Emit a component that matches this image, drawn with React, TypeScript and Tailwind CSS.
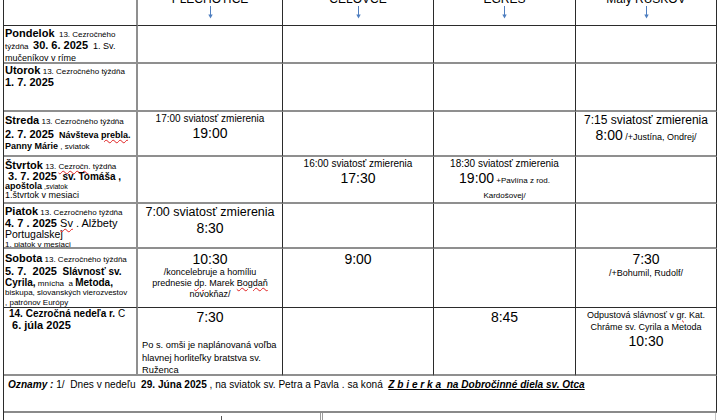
import React from "react";

const F = "font-['Liberation_Sans',Arial,sans-serif]";

function Arrow() {
  return (
    <svg width="7" height="13" viewBox="0 0 7 13" className="block mx-auto">
      <line x1="3.5" y1="0" x2="3.5" y2="9" stroke="#4f7fc0" strokeWidth="1" />
      <path d="M1.3 8.5 L5.7 8.5 L3.5 12.5 Z" fill="#4f7fc0" />
    </svg>
  );
}

function W({ children }: { children: React.ReactNode }) {
  return (
    <span className="underline decoration-wavy decoration-[#e02020] decoration-[1px] underline-offset-[1px]">
      {children}
    </span>
  );
}

const GB = "border-b-2 border-b-[#8f8f8f]";
const DB = "border-b border-b-[#2b2b2b]";

function Cell({
  col,
  bottom,
  className = "",
  children,
}: {
  col: number;
  bottom: string;
  className?: string;
  children?: React.ReactNode;
}) {
  const right =
    col === 0 ? "border-r-2 border-r-[#8f8f8f]" : "border-r border-r-[#2b2b2b]";
  return <div className={`${right} ${bottom} overflow-hidden ${className}`}>{children}</div>;
}

function L({ h, children }: { h: string; children: React.ReactNode }) {
  return <div className={`${h} whitespace-pre`}>{children}</div>;
}

function Empty({ bottom }: { bottom: string }) {
  return (
    <>
      <Cell col={1} bottom={bottom} />
      <Cell col={2} bottom={bottom} />
      <Cell col={3} bottom={bottom} />
      <Cell col={4} bottom={bottom} />
    </>
  );
}

function Head({ col, label }: { col: number; label: string }) {
  return (
    <Cell col={col} bottom={DB} className="pt-[4px] text-center">
      <div className="text-[12px] leading-[14px]">{label}</div>
      <Arrow />
    </Cell>
  );
}

const H9 = "h-[9px] leading-[9px]";
const H10 = "h-[10px] leading-[10px]";
const H11 = "h-[11px] leading-[11px]";
const H12 = "h-[12px] leading-[12px]";
const H13 = "h-[13px] leading-[13px]";
const H14 = "h-[14px] leading-[14px]";

export default function App() {
  return (
    <div className={`w-[720px] h-[420px] overflow-hidden bg-white text-black ${F}`}>
      <div className="ml-[3px] -mt-[12px] w-[714px] grid grid-cols-[134px_145px_151px_142px_141px] grid-rows-[38px_38px_48px_45px_47px_45px_59px_68px_37px] border-l border-l-[#2b2b2b]">
        {/* header */}
        <Cell col={0} bottom={DB} />
        <Head col={1} label="PLECHOTICE" />
        <Head col={2} label="CELOVCE" />
        <Head col={3} label="EGRES" />
        <Head col={4} label="Malý RUSKOV" />

        {/* Pondelok */}
        <Cell col={0} bottom={GB} className="pl-[1px] pt-[1px] text-[6px]">
          <L h={H12}>
            <b className="text-[11px]">Pondelok</b>
            <span className="text-[8px]">  13. Cezročného</span>
          </L>
          <L h={H13}>
            <span className="text-[8px]">týždňa  </span>
            <b className="text-[11px]">30. 6. 2025</b>
            <span className="text-[9px]">  1. Sv.</span>
          </L>
          <L h={H12}>
            <span className="text-[9px]">
              mučeníkov v <W>ríme</W>
            </span>
          </L>
        </Cell>
        <Empty bottom={GB} />

        {/* Utorok */}
        <Cell col={0} bottom={GB} className="pl-[1px] text-[6px]">
          <L h={H12}>
            <b className="text-[11px]">Utorok</b>
            <span className="text-[8px]"> 13. Cezročného týždňa</span>
          </L>
          <L h={H13}>
            <b className="text-[11px]">1. 7. 2025</b>
          </L>
        </Cell>
        <Empty bottom={GB} />

        {/* Streda */}
        <Cell col={0} bottom={GB} className="pl-[1px] pt-[2px] text-[6px]">
          <L h={H13}>
            <b className="text-[11px]">Streda</b>
            <span className="text-[8px]"> 13. Cezročného týždňa</span>
          </L>
          <L h={H14}>
            <b className="text-[11px]">2. 7. 2025</b>
            <b className="text-[9px]">  Návšteva <W>prebla</W>.</b>
          </L>
          <L h={H11}>
            <b className="text-[9px]">Panny Márie</b>
            <span className="text-[8px]"> , sviatok</span>
          </L>
        </Cell>
        <Cell col={1} bottom={GB} className="text-center pt-[1px]">
          <div className="text-[10px] leading-[12px]">17:00 sviatosť zmierenia</div>
          <div className="text-[14px] leading-[16px]">19:00</div>
        </Cell>
        <Cell col={2} bottom={GB} />
        <Cell col={3} bottom={GB} />
        <Cell col={4} bottom={GB} className="text-center pt-[1px]">
          <div className="text-[12px] leading-[14px]">7:15 sviatosť zmierenia</div>
          <div className="leading-[17px] text-[6px]">
            <span className="text-[14px]">8:00</span>
            <span className="text-[9px]"> /+Justína, Ondrej/</span>
          </div>
        </Cell>

        {/* Štvrtok */}
        <Cell col={0} bottom={GB} className="pl-[1px] pt-[2px] text-[6px]">
          <L h={H12}>
            <b className="text-[11px]">Štvrtok</b>
            <span className="text-[8px]"> 13. <W>Cezročn</W>. týždňa</span>
          </L>
          <L h={H10}>
            <b className="text-[11px]"> 3. 7. 2025</b>
            <b className="text-[10px]">  sv. Tomáša ,</b>
          </L>
          <L h={H10}>
            <b className="text-[9px]">apoštola</b>
            <span className="text-[7px]"> ,sviatok</span>
          </L>
          <L h={H9}>
            <span className="text-[9px]">1.štvrtok v mesiaci</span>
          </L>
        </Cell>
        <Cell col={1} bottom={GB} />
        <Cell col={2} bottom={GB} className="text-center pt-[1px]">
          <div className="text-[10px] leading-[12px]">16:00 sviatosť zmierenia</div>
          <div className="text-[14px] leading-[16px]">17:30</div>
        </Cell>
        <Cell col={3} bottom={GB} className="text-center pt-[1px]">
          <div className="text-[10px] leading-[12px]">18:30 sviatosť zmierenia</div>
          <div className="leading-[17px] text-[6px]">
            <span className="text-[14px]">19:00</span>
            <span className="text-[8px]"> +Pavlína z rod.</span>
          </div>
          <div className="text-[8px] leading-[12px]">Kardošovej/</div>
        </Cell>
        <Cell col={4} bottom={GB} />

        {/* Piatok */}
        <Cell col={0} bottom={GB} className="pl-[1px] pt-[1px] text-[6px]">
          <L h={H12}>
            <b className="text-[11px]">Piatok</b>
            <span className="text-[8px]"> 13. Cezročného týždňa</span>
          </L>
          <L h={H12}>
            <b className="text-[11px]">4. 7 . 2025</b>
            <span className="text-[11px]"> <W>Sv</W> . Alžbety</span>
          </L>
          <L h={H11}>
            <span className="text-[10.5px]">Portugalskej</span>
          </L>
          <L h={H9}>
            <span className="text-[8px]">1. piatok v mesiaci</span>
          </L>
        </Cell>
        <Cell col={1} bottom={GB} className="text-center pt-[1px]">
          <div className="text-[12.5px] leading-[15px]">7:00 sviatosť zmierenia</div>
          <div className="text-[14px] leading-[16px]">8:30</div>
        </Cell>
        <Cell col={2} bottom={GB} />
        <Cell col={3} bottom={GB} />
        <Cell col={4} bottom={GB} />

        {/* Sobota */}
        <Cell col={0} bottom={DB} className="pl-[1px] pt-[2px] text-[6px]">
          <L h={H14}>
            <b className="text-[11px]">Sobota</b>
            <span className="text-[8px]"> 13. Cezročného týždňa</span>
          </L>
          <L h={H12}>
            <b className="text-[11px]">5. 7.  2025</b>
            <b className="text-[10px]">  Slávnosť sv.</b>
          </L>
          <L h={H11}>
            <b className="text-[10px]">Cyrila,</b>
            <span className="text-[8px]"> mnícha  a </span>
            <b className="text-[10px]">Metoda,</b>
          </L>
          <L h={H10}>
            <span className="text-[8px]">biskupa, slovanských vierozvestov</span>
          </L>
          <L h={H9}>
            <span className="text-[8px]">, patrónov Európy</span>
          </L>
        </Cell>
        <Cell col={1} bottom={DB} className="text-center pt-[2px]">
          <div className="text-[14px] leading-[16px]">10:30</div>
          <div className="text-[9px] leading-[11px]">/koncelebruje a homíliu</div>
          <div className="text-[9px] leading-[11px]">
            prednesie <W>dp</W>. Marek <W>Bogdaň</W>
          </div>
          <div className="text-[9px] leading-[11px]">novokňaz/</div>
        </Cell>
        <Cell col={2} bottom={DB} className="text-center pt-[2px]">
          <div className="text-[14px] leading-[16px]">9:00</div>
        </Cell>
        <Cell col={3} bottom={DB} />
        <Cell col={4} bottom={DB} className="text-center pt-[2px]">
          <div className="text-[14px] leading-[16px]">7:30</div>
          <div className="text-[9px] leading-[12px]">/+Bohumil, Rudolf/</div>
        </Cell>

        {/* Nedeľa */}
        <Cell col={0} bottom={GB} className="pl-[5px] text-[6px]">
          <L h={H12}>
            <b className="text-[10px]">14. Cezročná nedeľa r.</b>
            <span className="text-[10px]"> C</span>
          </L>
          <L h={H11}>
            <b className="text-[11px]"> 6. júla 2025</b>
          </L>
        </Cell>
        <Cell col={1} bottom={GB} className="pt-[1px]">
          <div className="text-center text-[14px] leading-[16px]">7:30</div>
          <div className="pl-[4px] mt-[14px] text-[9.3px] leading-[12.5px]">
            <div>Po s. omši je naplánovaná voľba</div>
            <div>hlavnej horliteľky bratstva sv.</div>
            <div>Ruženca</div>
          </div>
        </Cell>
        <Cell col={2} bottom={GB} />
        <Cell col={3} bottom={GB} className="text-center pt-[1px]">
          <div className="text-[14px] leading-[16px]">8:45</div>
        </Cell>
        <Cell col={4} bottom={GB} className="text-center pt-[1px]">
          <div className="text-[9px] leading-[12px]">
            Odpustová slávnosť v <W>gr</W>. Kat.
          </div>
          <div className="text-[9px] leading-[12px]">Chráme sv. Cyrila a Metoda</div>
          <div className="text-[14px] leading-[16px]">10:30</div>
        </Cell>

        {/* Oznamy */}
        <div className="col-span-5 border-r border-r-[#2b2b2b] border-b-2 border-b-[#8a8a8a] pl-[4px] pt-[3px] whitespace-pre text-[10.1px] leading-[12px]">
          <b className="italic">Oznamy :</b>
          <span> 1/  Dnes v nedeľu  </span>
          <b>29. Júna 2025</b>
          <span> , na sviatok sv. Petra a Pavla . sa koná  </span>
          <b className="italic underline underline-offset-[1px]">Z b i e r k a  na Dobročinné diela sv. Otca</b>
        </div>
      </div>

      {/* bottom boxes */}
      <div className="ml-[3px] flex h-[20px]">
        <div className="relative w-[318px] border-l border-l-[#2b2b2b] border-r border-r-[#9a9a9a]">
          <div className="absolute left-[217px] top-[3px] w-[1px] h-[4px] bg-[#555]" />
        </div>
        <div className="ml-[1px] w-[394px] border-l border-l-[#9a9a9a] border-r border-r-[#c4c4c4]" />
      </div>
    </div>
  );
}
